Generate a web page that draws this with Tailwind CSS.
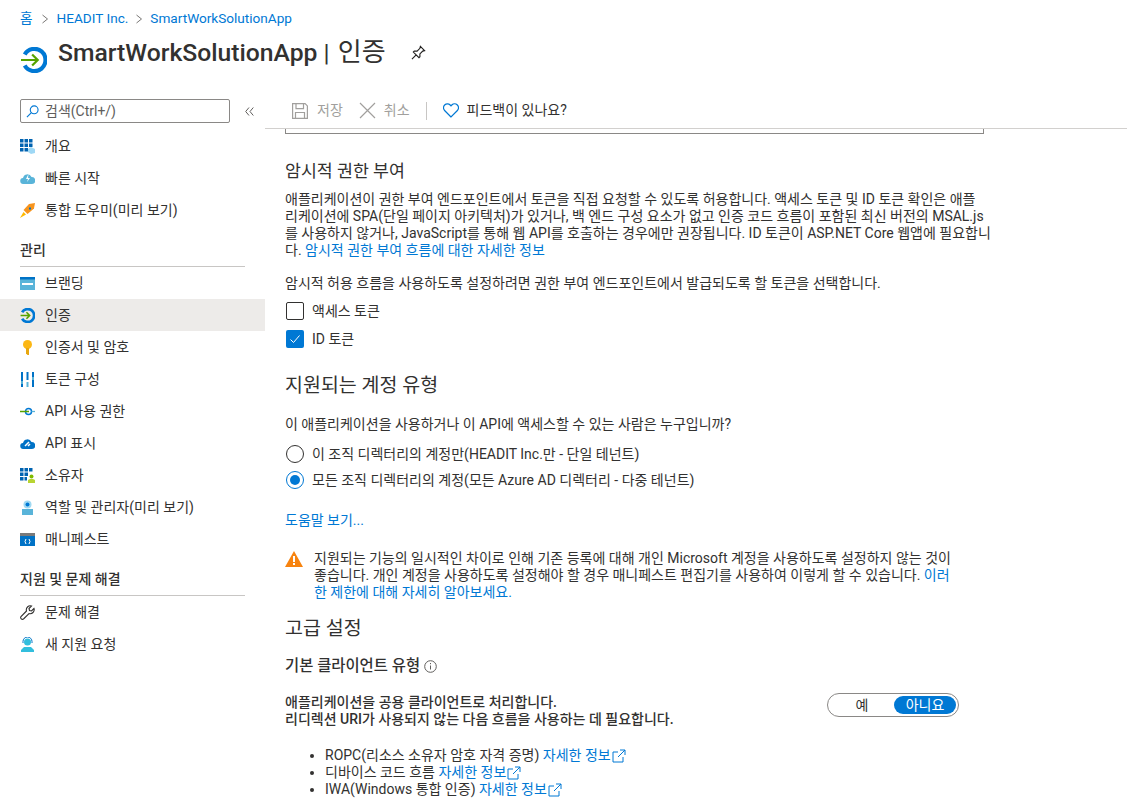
<!DOCTYPE html>
<html lang="ko">
<head>
<meta charset="UTF-8">
<title>SmartWorkSolutionApp | 인증</title>
<script src="https://cdn.jsdelivr.net/npm/@tailwindcss/browser@4"></script>
</head>
<body class="w-[1127px] h-[804px] overflow-hidden bg-white text-[#323130] text-[14px] leading-[17px] font-['Roboto','Noto_Sans_CJK_KR',sans-serif]">
  <!-- header -->
  <div class="h-[90px] px-5">
    <nav class="pt-[8px] h-[29px] flex items-center text-[#0078d4] text-[13.600px]">
      <a>홈</a>
      <svg class="mx-[8px] w-[8px] h-[10px]" viewBox="0 0 8 10" fill="none" stroke="#797775"><path d="M1.500 1l5 4-5 4"/></svg>
      <a>HEADIT Inc.</a>
      <svg class="mx-[7px] w-[8px] h-[10px]" viewBox="0 0 8 10" fill="none" stroke="#797775"><path d="M1.500 1l5 4-5 4"/></svg>
      <a>SmartWorkSolutionApp</a>
    </nav>
    <div class="flex items-center mt-[5px] h-[36px]">
      <svg class="ml-px w-[26px] h-[26px] mt-[16px]" viewBox="0 0 28 28" fill="none"><path d="M4 8 A12 12 0 1 1 4 20" stroke="#0078d4" stroke-width="4.500"/><path d="M0 14h18M12 8l6 6-6 6" stroke="#57a300" stroke-width="2.400"/></svg>
      <h1 class="ml-[11px] text-[24.700px] font-medium leading-[32px]">SmartWorkSolutionApp <span class="font-normal">|</span> <span class="font-normal text-[26px] ml-[2px]">인증</span></h1>
      <svg class="ml-[25px] w-[15px] h-[15px]" viewBox="0 0 16 16" fill="none" stroke="#201f1e" stroke-width="1.200"><path d="M10 1.500l4.500 4.500-2 .5-3 3 0 3-1 1L2.500 7.500l1-1h3l3-3zM5.500 10.500L1 15"/></svg>
    </div>
  </div>
  <div class="flex h-[714px]">
    <!-- sidebar -->
    <aside class="w-[265px] shrink-0">
      <div class="flex items-center h-[24px] mt-[9px] pl-5">
        <div class="w-[210px] h-[24px] border border-[#8a8886] rounded-[2px] flex items-center pl-[5px] gap-[6px]">
          <svg class="w-[13px] h-[13px]" viewBox="0 0 14 14" fill="none" stroke="#0078d4" stroke-width="1.200"><circle cx="8.800" cy="5.200" r="4.200"/><path d="M5.800 8.200L1 13"/></svg>
          <span class="text-[#605e5c]">검색(Ctrl+/)</span>
        </div>
        <svg class="ml-[15px] w-[9px] h-[9px]" viewBox="0 0 9 9" fill="none" stroke="#605e5c"><path d="M4 .5L.7 4.500 4 8.500M8.300 .5L5 4.500l3.300 4"/></svg>
      </div>
      <ul class="mt-[7px]">
        <li class="h-[32px] pl-5 flex items-center gap-[10px]">
          <svg class="w-[15px] h-[15px]" viewBox="0 0 15 15"><path fill="#0063b1" d="M0 0h3.500v3.500H0zM4.500 0H8v3.500H4.500zM9 0h3.500v3.500H9zM0 4.500h3.500V8H0zM4.500 4.500H8V8H4.500zM9 4.500h3.500V8H9zM0 9h3.500v3.500H0zM4.500 9H8v3.500H4.500z"/><path fill="#9fd8f5" d="M11 8l4 2v4l-4 1-3-2v-3z"/></svg>
          <span>개요</span></li>
        <li class="h-[32px] pl-5 flex items-center gap-[10px]">
          <svg class="w-[15px] h-[15px]" viewBox="0 0 15 15"><path fill="#59b4d9" d="M3.500 13A3 3 0 0 1 3 7a4.500 4.500 0 0 1 8.500-1A3.500 3.500 0 0 1 12 13z"/><path fill="#fff" d="M8.500 3L6 8h2l-1 3 3-4H8z"/></svg>
          <span>빠른 시작</span></li>
        <li class="h-[32px] pl-5 flex items-center gap-[10px]">
          <svg class="w-[15px] h-[15px]" viewBox="0 0 15 15"><path fill="#f7941d" d="M15 0L9 1 3.500 7l4 4L14 5.500z"/><path fill="#ffb900" d="M3.500 9L0 15l6-3.500z"/><path fill="#0072c6" d="M9 4.500h2v2H9z"/></svg>
          <span>통합 도우미(미리 보기)</span></li>
      </ul>
      <div class="mx-5 mt-[12px] h-[29px] border-b border-[#c8c6c4] font-medium leading-[24px]">관리</div>
      <ul>
        <li class="h-[32px] pl-5 flex items-center gap-[10px]">
          <svg class="w-[15px] h-[13px]" viewBox="0 0 15 13"><path fill="#59b4d9" d="M0 0h15v13H0z"/><path fill="#0072c6" d="M0 0h15v2.500H0z"/><path fill="#fff" d="M2 6h11v2H2z"/></svg>
          <span>브랜딩</span></li>
        <li class="h-[32px] pl-5 flex items-center gap-[10px] bg-[#edebe9]">
          <svg class="w-[15px] h-[15px]" viewBox="0 0 28 28" fill="none"><path d="M4 8 A12 12 0 1 1 4 20" stroke="#0078d4" stroke-width="5"/><path d="M1 14h17M12 8l6 6-6 6" stroke="#57a300" stroke-width="3"/></svg>
          <span>인증</span></li>
        <li class="h-[32px] pl-5 flex items-center gap-[10px]">
          <svg class="w-[15px] h-[15px]" viewBox="0 0 15 15"><circle cx="7.500" cy="4.500" r="4.500" fill="#fcb714"/><path fill="#e8a70f" d="M6 8h3v7H7.500L6 13.500z"/></svg>
          <span>인증서 및 암호</span></li>
        <li class="h-[32px] pl-5 flex items-center gap-[10px]">
          <svg class="w-[15px] h-[15px]" viewBox="0 0 15 15"><path fill="#0072c6" d="M1 0h2v15H1zM12 0h2v15h-2z"/><path fill="#59b4d9" d="M1 9h2v3H1zM12 5h2v3h-2z"/><path fill="#0072c6" d="M6.500 0h2v8h-2z"/><path fill="#59b4d9" d="M6.500 10h2v5h-2z"/></svg>
          <span>토큰 구성</span></li>
        <li class="h-[32px] pl-5 flex items-center gap-[10px]">
          <svg class="w-[15px] h-[15px]" viewBox="0 0 15 15" fill="none"><circle cx="8.500" cy="7.500" r="3" stroke="#0078d4" stroke-width="1.500"/><path d="M11.500 7.500H15" stroke="#59b4d9" stroke-width="1.300"/><path d="M0 7.500h9" stroke="#57a300" stroke-width="1.500"/></svg>
          <span>API 사용 권한</span></li>
        <li class="h-[32px] pl-5 flex items-center gap-[10px]">
          <svg class="w-[15px] h-[15px]" viewBox="0 0 15 15"><path fill="#0072c6" d="M3.500 13A3 3 0 0 1 3 7a4.500 4.500 0 0 1 8.500-1A3.500 3.500 0 0 1 12 13z"/><path stroke="#fff" stroke-width="1.500" d="M5 10l4-4M8 10l2-2"/></svg>
          <span>API 표시</span></li>
        <li class="h-[32px] pl-5 flex items-center gap-[10px]">
          <svg class="w-[15px] h-[15px]" viewBox="0 0 15 15"><path fill="#0063b1" d="M0 0h3.500v3.500H0zM4.500 0H8v3.500H4.500zM0 4.500h3.500V8H0zM4.500 4.500H8V8H4.500zM0 9h3.500v3.500H0zM4.500 9H7v3.500H4.500z"/><path fill="#0063b1" d="M9 0h3.500v3.500H9z"/><path fill="#b8d432" d="M8 15v-3l2-1h3l2 1v3z"/><circle cx="11.500" cy="8.500" r="2" fill="#7fba00"/></svg>
          <span>소유자</span></li>
        <li class="h-[32px] pl-5 flex items-center gap-[10px]">
          <svg class="w-[15px] h-[15px]" viewBox="0 0 15 15"><path fill="#59b4d9" d="M2 15V9h11v6z"/><circle cx="7.500" cy="4.500" r="4" fill="#a0d9f2"/><circle cx="7.500" cy="4.500" r="2" fill="#0078d4"/></svg>
          <span>역할 및 관리자(미리 보기)</span></li>
        <li class="h-[32px] pl-5 flex items-center gap-[10px]">
          <svg class="w-[15px] h-[13px]" viewBox="0 0 15 13"><path fill="#0072c6" d="M0 0h15v13H0z"/><path fill="#7a7a7a" d="M0 0h15v3H0z"/><path stroke="#fff" fill="none" d="M6 6L5 8.500 6 11M9 6l1 2.500L9 11"/></svg>
          <span>매니페스트</span></li>
      </ul>
      <div class="mx-5 mt-[12px] h-[29px] border-b border-[#c8c6c4] font-medium leading-[24px]">지원 및 문제 해결</div>
      <ul>
        <li class="h-[32px] pl-5 flex items-center gap-[10px]">
          <svg class="w-[15px] h-[15px]" viewBox="0 0 15 15" fill="none" stroke="#323130" stroke-width="1.100"><path d="M14 3.500L11.500 6 9.500 5.500 9 3.500 11.500 1A4 4 0 0 0 6.500 6L1 11.500a1.800 1.800 0 0 0 2.500 2.500L9 8.500A4 4 0 0 0 14 3.500z"/></svg>
          <span>문제 해결</span></li>
        <li class="h-[32px] pl-5 flex items-center gap-[10px]">
          <svg class="w-[15px] h-[15px]" viewBox="0 0 15 15"><path fill="#32bedd" d="M1 15v-2l3-3h7l3 3v2z"/><circle cx="7.500" cy="5" r="3.500" fill="#32bedd"/><path stroke="#0072c6" fill="none" d="M3 6V4.500a4.500 4.500 0 0 1 9 0V6"/></svg>
          <span>새 지원 요청</span></li>
      </ul>
    </aside>
    <!-- main -->
    <main class="flex-1 min-w-0 relative">
      <div class="h-[39px] border-b border-[#d2d0ce] flex items-center pl-[27px] pt-[3px]">
        <svg class="w-[16px] h-[16px]" viewBox="0 0 16 16" fill="none" stroke="#a19f9d" stroke-width="1.200"><path d="M.6.600h12.500l2.300 2.300v12.500H.6zM4 .6v5h7.500v-5M3.500 15.400V9.500h9v5.900"/></svg>
        <span class="ml-[9px] text-[#a19f9d]">저장</span>
        <svg class="ml-[16px] w-[17px] h-[17px]" viewBox="0 0 17 17" fill="none" stroke="#a19f9d" stroke-width="1.200"><path d="M1 1l15 15M16 1L1 16"/></svg>
        <span class="ml-[8px] text-[#a19f9d]">취소</span>
        <span class="ml-[16px] h-[18px] w-px bg-[#c8c6c4]"></span>
        <svg class="ml-[16px] w-[16px] h-[15px]" viewBox="0 0 16 15" fill="none" stroke="#0078d4" stroke-width="1.200"><path d="M8 14L1.600 7.500A3.900 3.900 0 0 1 7.200 2L8 2.900 8.800 2a3.900 3.900 0 0 1 5.600 5.500z"/></svg>
        <span class="ml-[8px]">피드백이 있나요?</span>
      </div>
      <div class="h-[675px] overflow-hidden relative pl-[20px]">
        <div class="w-[699px] h-[5px] border border-t-0 border-[#8a8886]"></div>
        <h2 class="mt-[26px] text-[17.300px] leading-[22px] font-normal">암시적 권한 부여</h2>
        <p class="mt-[9px] w-[720px]">애플리케이션이 권한 부여 엔드포인트에서 토큰을 직접 요청할 수 있도록 허용합니다. 액세스 토큰 및 ID 토큰 확인은 애플<br>리케이션에 SPA(단일 페이지 아키텍처)가 있거나, 백 엔드 구성 요소가 없고 인증 코드 흐름이 포함된 최신 버전의 MSAL.js<br>를 사용하지 않거나, JavaScript를 통해 웹 API를 호출하는 경우에만 권장됩니다. ID 토큰이 ASP.NET Core 웹앱에 필요합니<br>다. <a class="text-[#0078d4]">암시적 권한 부여 흐름에 대한 자세한 정보</a></p>
        <p class="mt-[16px]">암시적 허용 흐름을 사용하도록 설정하려면 권한 부여 엔드포인트에서 발급되도록 할 토큰을 선택합니다.</p>
        <label class="flex items-center h-[18px] mt-[10px] gap-[8px] ml-px"><span class="w-[18px] h-[18px] border border-[#323130] rounded-[2px]"></span>액세스 토큰</label>
        <label class="flex items-center h-[18px] mt-[10px] gap-[8px] ml-px"><span class="w-[18px] h-[18px] bg-[#0078d4] rounded-[2px] flex items-center justify-center"><svg class="w-[12px] h-[12px]" viewBox="0 0 12 12" fill="none" stroke="#fff"><path d="M1.500 6.500l3 3 6-7"/></svg></span>ID 토큰</label>
        <h2 class="mt-[26px] text-[19.500px] leading-[24px] font-normal">지원되는 계정 유형</h2>
        <p class="mt-[18px]">이 애플리케이션을 사용하거나 이 API에 액세스할 수 있는 사람은 누구입니까?</p>
        <label class="flex items-center h-[18px] mt-[12px] gap-[8px] ml-px"><span class="w-[18px] h-[18px] rounded-full border border-[#323130]"></span>이 조직 디렉터리의 계정만(HEADIT Inc.만 - 단일 테넌트)</label>
        <label class="flex items-center h-[18px] mt-[8px] gap-[8px] ml-px"><span class="w-[18px] h-[18px] rounded-full border border-[#0078d4] flex items-center justify-center"><span class="w-[10px] h-[10px] rounded-full bg-[#0078d4]"></span></span>모든 조직 디렉터리의 계정(모든 Azure AD 디렉터리 - 다중 테넌트)</label>
        <a class="block mt-[23px] text-[#0078d4]">도움말 보기...</a>
        <div class="flex mt-[21px] w-[700px]">
          <svg class="w-[18px] h-[16px] mt-[1px] shrink-0" viewBox="0 0 18 16"><path fill="#f7830f" d="M9 0l9 16H0z"/><path fill="#fff" d="M8 5h2v6H8zM8 12h2v2H8z"/></svg>
          <p class="ml-[11px]">지원되는 기능의 일시적인 차이로 인해 기존 등록에 대해 개인 Microsoft 계정을 사용하도록 설정하지 않는 것이<br>좋습니다. 개인 계정을 사용하도록 설정해야 할 경우 매니페스트 편집기를 사용하여 이렇게 할 수 있습니다. <a class="text-[#0078d4]">이러<br>한 제한에 대해 자세히 알아보세요.</a></p>
        </div>
        <h2 class="mt-[16px] text-[19.500px] leading-[24px] font-normal">고급 설정</h2>
        <div class="mt-[17px] flex items-center font-medium text-[15.400px]">기본 클라이언트 유형
          <svg class="ml-[4px] w-[13px] h-[13px]" viewBox="0 0 13 13" fill="none" stroke="#605e5c"><circle cx="6.500" cy="6.500" r="5.800"/><path d="M6.500 5.500v4M6.500 3v1.200"/></svg>
        </div>
        <div class="mt-[19px] flex items-start">
          <p class="w-[542px] font-medium">애플리케이션을 공용 클라이언트로 처리합니다.<br>리디렉션 URI가 사용되지 않는 다음 흐름을 사용하는 데 필요합니다.</p>
          <div class="-mt-[1px] w-[132px] h-[24px] border border-[#8a8886] rounded-full flex items-center p-[2px]">
            <span class="w-[65px] text-center">예</span>
            <span class="w-[63px] h-[18px] rounded-full bg-[#0078d4] text-white text-center leading-[18px]">아니요</span>
          </div>
        </div>
        <ul class="mt-[19px] ml-[40px] list-disc leading-[17px]">
          <li>ROPC(리소스 소유자 암호 자격 증명) <a class="text-[#0078d4]">자세한 정보</a><svg class="inline w-[14px] h-[14px] ml-px" viewBox="0 0 14 14" fill="none" stroke="#0078d4"><path d="M6 3H1v10h10V8M8 1h5v5M13 1L6 8"/></svg></li>
          <li>디바이스 코드 흐름 <a class="text-[#0078d4]">자세한 정보</a><svg class="inline w-[14px] h-[14px] ml-px" viewBox="0 0 14 14" fill="none" stroke="#0078d4"><path d="M6 3H1v10h10V8M8 1h5v5M13 1L6 8"/></svg></li>
          <li>IWA(Windows 통합 인증) <a class="text-[#0078d4]">자세한 정보</a><svg class="inline w-[14px] h-[14px] ml-px" viewBox="0 0 14 14" fill="none" stroke="#0078d4"><path d="M6 3H1v10h10V8M8 1h5v5M13 1L6 8"/></svg></li>
        </ul>
      </div>
    </main>
  </div>
</body>
</html>
